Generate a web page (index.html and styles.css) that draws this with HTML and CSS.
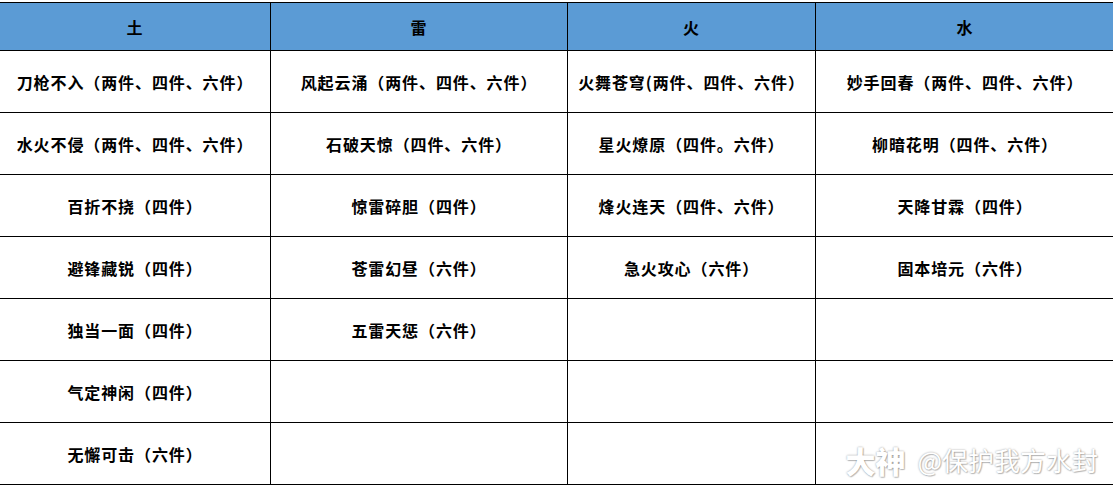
FILE: index.html
```html
<!DOCTYPE html>
<html lang="zh">
<head>
<meta charset="utf-8">
<link rel="stylesheet" href="styles.css">
</head>
<body>
<div class="page">
<table class="sets">
<colgroup>
<col class="c1"><col class="c2"><col class="c3"><col class="c4">
</colgroup>
<thead>
<tr><th>土</th><th>雷</th><th>火</th><th>水</th></tr>
</thead>
<tbody>
<tr><td>刀枪不入（两件、四件、六件）</td><td>风起云涌（两件、四件、六件）</td><td>火舞苍穹(两件、四件、六件）</td><td>妙手回春（两件、四件、六件）</td></tr>
<tr><td>水火不侵（两件、四件、六件）</td><td>石破天惊（四件、六件）</td><td>星火燎原（四件。六件）</td><td>柳暗花明（四件、六件）</td></tr>
<tr><td>百折不挠（四件）</td><td>惊雷碎胆（四件）</td><td>烽火连天（四件、六件）</td><td>天降甘霖（四件）</td></tr>
<tr><td>避锋藏锐（四件）</td><td>苍雷幻昼（六件）</td><td>急火攻心（六件）</td><td>固本培元（六件）</td></tr>
<tr><td>独当一面（四件）</td><td>五雷天惩（六件）</td><td></td><td></td></tr>
<tr><td>气定神闲（四件）</td><td></td><td></td><td></td></tr>
<tr><td>无懈可击（六件）</td><td></td><td></td><td></td></tr>
</tbody>
</table>
<div class="watermark"><span class="brand">大神</span>@保护我方水封</div>
</div>
</body>
</html>
```
FILE: styles.css
```css
html, body {
  margin: 0;
  padding: 0;
  background: #ffffff;
  overflow: hidden;
}
.page {
  position: relative;
  width: 1113px;
  height: 486px;
  padding-top: 2px;
  box-sizing: border-box;
}
.sets {
  border-collapse: collapse;
  table-layout: fixed;
  width: 1115px;
  margin-left: -1px;
  font-family: "Noto Sans CJK SC", "Noto Sans", sans-serif;
  font-size: 16px;
  font-weight: bold;
  letter-spacing: 0.9px;
  color: #000;
}
.c1 { width: 271px; }
.c2 { width: 297px; }
.c3 { width: 248px; }
.c4 { width: 299px; }
.sets th, .sets td {
  border: 1px solid #000;
  text-align: center;
  vertical-align: middle;
  padding: 0;
  line-height: 20px;
}
.sets th {
  background: #5b9bd5;
  height: 47px;
  font-weight: bold;
}
.sets td {
  height: 61px;
}
.watermark {
  position: absolute;
  right: 15px;
  bottom: 9px;
  display: flex;
  align-items: center;
  font-family: "Noto Sans CJK SC", sans-serif;
  font-size: 26px;
  line-height: 34px;
  color: #ffffff;
  text-shadow: 0 0 2px rgba(0,0,0,0.4), 1px 1px 1px rgba(0,0,0,0.2);
  white-space: nowrap;
}
.watermark .brand {
  font-weight: 900;
  font-size: 30px;
  margin-right: 12px;
}
```
